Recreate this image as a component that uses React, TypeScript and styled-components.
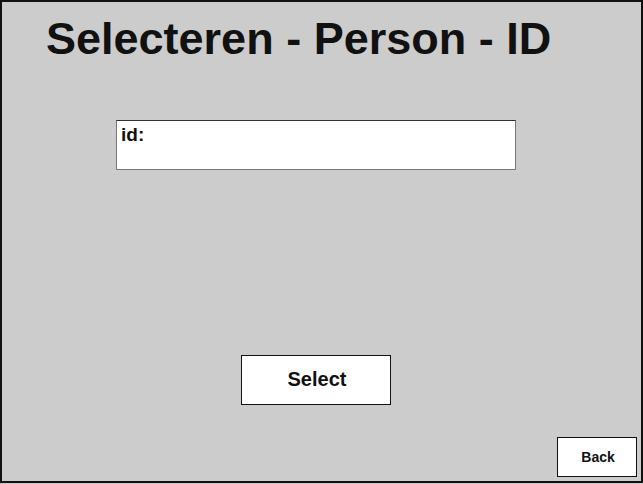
import React from "react";
import styled, { createGlobalStyle } from "styled-components";

const GlobalStyle = createGlobalStyle`
  html, body {
    margin: 0;
    padding: 0;
    background: #cccccc;
  }
  body {
    font-family: "Liberation Sans", Arial, sans-serif;
  }
`;

const Frame = styled.div`
  box-sizing: border-box;
  width: 643px;
  height: 483px;
  border: 2px solid #111;
  background: #cccccc;
  display: flex;
  flex-direction: column;
`;

const Title = styled.h1`
  margin: 14px 0 0 0;
  padding-left: 44px;
  font-size: 45px;
  line-height: 45px;
  font-weight: bold;
  color: #111;
`;

const Content = styled.div`
  margin: 59px 0 0 114px;
  width: 400px;
  display: flex;
  flex-direction: column;
  align-items: center;
`;

const Field = styled.div`
  box-sizing: border-box;
  width: 400px;
  height: 50px;
  background: #fff;
  border: 1px solid #777;
  border-top-color: #333;
  padding: 3px 4px;
  font-size: 19px;
  font-weight: bold;
  color: #111;
`;

const Button = styled.button<{ $w: number; $h: number; $fs: number }>`
  box-sizing: border-box;
  width: ${(p) => p.$w}px;
  height: ${(p) => p.$h}px;
  background: #fff;
  border: 1px solid #111;
  border-radius: 0;
  padding: 0 0 1px 2px;
  font-family: "Liberation Sans", Arial, sans-serif;
  font-size: ${(p) => p.$fs}px;
  font-weight: bold;
  color: #111;
  display: flex;
  align-items: center;
  justify-content: center;
`;

const SelectWrap = styled.div`
  margin-top: 185px;
`;

const Footer = styled.div`
  margin-top: auto;
  display: flex;
  justify-content: flex-end;
  padding: 0 4px 4px 0;
`;

export default function App() {
  return (
    <>
      <GlobalStyle />
      <Frame>
        <Title>Selecteren - Person - ID</Title>
        <Content>
          <Field>id:</Field>
          <SelectWrap>
            <Button $w={150} $h={50} $fs={20}>Select</Button>
          </SelectWrap>
        </Content>
        <Footer>
          <Button $w={80} $h={40} $fs={14}>Back</Button>
        </Footer>
      </Frame>
    </>
  );
}
